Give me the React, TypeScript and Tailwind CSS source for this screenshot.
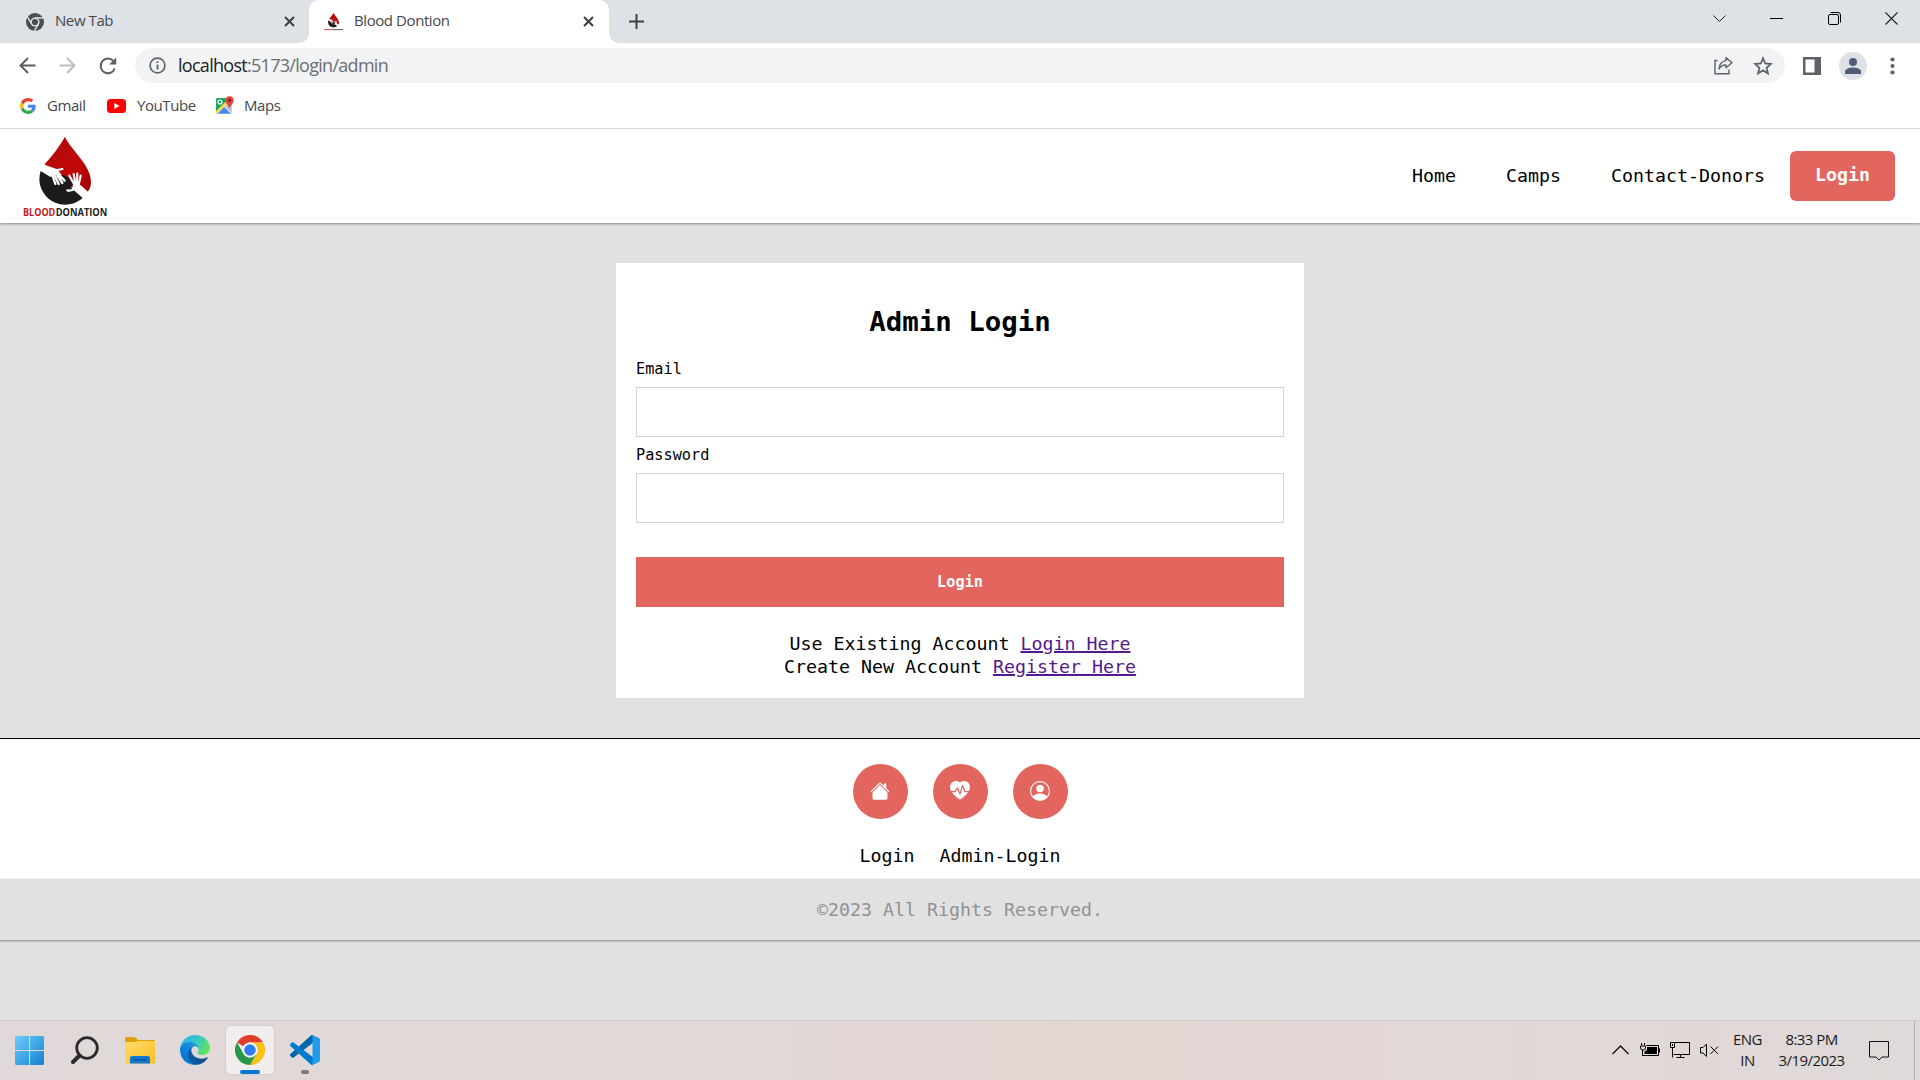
import React from "react";
import { BsHouseFill, BsHeartPulseFill, BsPersonCircle } from "react-icons/bs";

const ui = "font-['Open_Sans','Noto_Sans',sans-serif]";

function Drop() {
  return (
    <g>
      <path fill="url(#blood)" d="M195 48C214 90 273 132 273 184C273 196 269 206 263 214L240 206L216 198L204 176L150 162L134 130Q170 92 195 48Z" />
      <path fill="#1b1b1b" d="M122 151L150 168L190 163Q208 168 218 190L214 202L248 232A78 78 0 0 1 118 178Q118 163 122 151Z" />
      <g fill="none" stroke="#fff" strokeLinecap="round">
        <path strokeWidth="17" d="M128 141L160 160" />
        <path strokeWidth="12" d="M136 139L168 151L178 164" />
        <path strokeWidth="7" d="M158 147Q170 150 187 145M158 166L166 190M166 168L176 190M172 164L187 187M176 162L194 180" />
        <path strokeWidth="19" d="M228 195L244 209" />
        <path strokeWidth="20" d="M240 205L264 227" />
        <path strokeWidth="6.5" d="M222 190L208 165M226 188L221 160M231 188L232 159M236 192L242 165M226 203Q214 212 202 209" />
      </g>
    </g>
  );
}

function BloodDefs() {
  return (
    <defs>
      <linearGradient id="blood" x1="0" x2="1" y1="0" y2="1">
        <stop offset="0" stopColor="#a80c0c" />
        <stop offset="0.6" stopColor="#c40606" />
        <stop offset="1" stopColor="#a00000" />
      </linearGradient>
    </defs>
  );
}

function Logo() {
  return (
    <svg className="h-[85px] w-[90px]" viewBox="60 40 270 255">
      <BloodDefs />
      <Drop />
      <text x="69" y="287" fontSize="29" fontWeight="700" fontFamily="Open Sans" textLength="97" lengthAdjust="spacingAndGlyphs" fill="#c41a1a">BLOOD</text>
      <text x="167" y="287" fontSize="29" fontWeight="700" fontFamily="Open Sans" textLength="155" lengthAdjust="spacingAndGlyphs" fill="#1d1d1d">DONATION</text>
    </svg>
  );
}

function CloseX() {
  return (
    <svg className="size-[11px]" viewBox="0 0 11 11" stroke="#3c4043" strokeWidth="2" fill="none">
      <path d="M1 1L10 10M10 1L1 10" />
    </svg>
  );
}

function TabStrip() {
  const title = `whitespace-nowrap pb-[3px] text-[15px] leading-[20px] tracking-[-0.42px] text-[#45484c] ${ui}`;
  return (
    <div className="flex h-[43px] bg-[#dee1e6]">
      <div className="flex w-[309px] items-center overflow-hidden bg-white">
        <div className="flex h-[43px] w-[309px] items-center rounded-br-[10px] bg-[#dee1e6] pl-[26px]">
          <svg className="size-[18px]" viewBox="0 0 18 18">
            <circle cx="9" cy="9" r="9" fill="#4a4d51" />
            <circle cx="9" cy="9" r="4.6" fill="#dee1e6" />
            <circle cx="9" cy="9" r="3.1" fill="#4a4d51" />
            <path d="M9 5H17M5.6 11L1.6 4.2M12.4 11L8.4 17.9" stroke="#dee1e6" strokeWidth="1.4" />
          </svg>
          <span className={`ml-[11px] w-[229px] ${title}`}>New Tab</span>
          <CloseX />
        </div>
      </div>
      <div className="flex bg-white">
        <div className="flex bg-[#dee1e6]">
          <div className="flex h-[43px] w-[300px] items-center rounded-t-[10px] bg-white pl-[15px]">
            <svg className="size-[19px]" viewBox="60 40 270 255">
              <Drop />
              <path d="M60 283H166" stroke="#c44" strokeWidth="14" />
              <path d="M166 283H330" stroke="#555" strokeWidth="14" />
            </svg>
            <span className={`ml-[11px] w-[229px] ${title}`}>Blood Dontion</span>
            <CloseX />
          </div>
        </div>
      </div>
      <div className="flex-1 bg-white">
        <div className="flex h-[43px] items-center justify-between rounded-bl-[10px] bg-[#dee1e6] pl-[20px] pr-[22px]">
          <svg className="size-[15px]" viewBox="0 0 15 15" stroke="#3c4043" strokeWidth="2">
            <path d="M7.5 0V15M0 7.5H15" />
          </svg>
          <div className="flex items-center gap-[44.3px] pb-[6px]">
            <svg className="size-[13px]" viewBox="0 0 13 13" fill="none" stroke="#222"><path d="M0.5 3.5L6.5 9.5L12.5 3.5" /></svg>
            <svg className="size-[13px]" viewBox="0 0 13 13" stroke="#000"><path d="M0 6.5H13" /></svg>
            <svg className="size-[13px]" viewBox="0 0 13 13" fill="none" stroke="#000">
              <rect x="0.5" y="2.5" width="10" height="10" rx="1.5" />
              <path d="M2.5 0.5H10Q12.5 0.5 12.5 3V10.5" />
            </svg>
            <svg className="size-[13px]" viewBox="0 0 13 13" stroke="#222" strokeWidth="1.1"><path d="M0.5 0.5L12.5 12.5M12.5 0.5L0.5 12.5" /></svg>
          </div>
        </div>
      </div>
    </div>
  );
}

function Toolbar() {
  return (
    <div className="flex h-[45px] items-center bg-white pl-[19px]">
      <svg className="size-[17px]" viewBox="0 0 17 17" fill="none" stroke="#5a5d61" strokeWidth="1.9"><path d="M16.5 8.5H1.5M9 1L1.5 8.5L9 16" /></svg>
      <svg className="ml-[23px] size-[17px]" viewBox="0 0 17 17" fill="none" stroke="#bcbdbf" strokeWidth="1.9"><path d="M0.5 8.5H15.5M8 1L15.5 8.5L8 16" /></svg>
      <svg className="ml-[23px] size-[18px]" viewBox="0 0 18 18" fill="none" stroke="#5a5d61" strokeWidth="2">
        <path d="M15.8 11.5A7.3 7.3 0 1 1 14.2 3.8" />
        <path d="M17.2 0.5V7.5H10.2Z" fill="#5a5d61" stroke="none" />
      </svg>
      <div className="ml-[18px] flex h-[35px] w-[1650px] items-center rounded-full bg-[#f1f3f4] pl-[14px] pr-[12px]">
        <svg className="size-[17px]" viewBox="0 0 17 17" fill="none" stroke="#5f6368">
          <circle cx="8.5" cy="8.500" r="7.400" strokeWidth="1.700" />
          <path d="M8.500 7.500V12.600M8.500 4.200V6" strokeWidth="1.800" />
        </svg>
        <span className={`ml-[12px] flex-1 whitespace-nowrap pb-px text-[18px] leading-[24px] tracking-[-0.71px] text-[#6b6f74] ${ui}`}>
          <span className="text-[#202124]">localhost</span>:5173/login/admin
        </span>
        <svg className="h-[19px] w-[19px]" viewBox="0 0 19 19" fill="none" stroke="#5f6368" strokeWidth="1.400">
          <path d="M3.500 4.500H1V17.700H15V13.500" />
          <path d="M12 1.600L18 6.700L12 11.800V9Q7.500 8.600 5 12.800Q5.600 5.400 12 4.600Z" strokeLinejoin="round" />
        </svg>
        <svg className="ml-[20px] size-[20px]" viewBox="0 0 20 20" fill="none" stroke="#5f6368" strokeWidth="1.800">
          <path d="M10 2.200L12.200 7.500L17.900 8L13.600 11.800L14.900 17.400L10 14.400L5.100 17.400L6.400 11.800L2.100 8L7.800 7.500Z" />
        </svg>
      </div>
      <svg className="ml-[18px] size-[18px]" viewBox="0 0 18 18">
        <path fill="#5f6368" d="M0 0H18V18H0Z" />
        <path fill="#fff" d="M2.500 2.500H11.500V15.500H2.500Z" />
      </svg>
      <div className="ml-[18px] flex size-[28px] items-center justify-center rounded-full bg-[#dee1e6]">
        <svg className="size-[16px]" viewBox="0 0 16 16" fill="#4f5d75">
          <circle cx="8" cy="4" r="4" />
          <path d="M0 16V13.500C0 10.800 5 9.600 8 9.600S16 10.800 16 13.500V16Z" />
        </svg>
      </div>
      <svg className="ml-[23px] h-[18px] w-[5px]" viewBox="0 0 5 18" fill="#5f6368">
        <circle cx="2.500" cy="2.500" r="2.100" /><circle cx="2.500" cy="9" r="2.100" /><circle cx="2.500" cy="15.500" r="2.100" />
      </svg>
    </div>
  );
}

function Bookmarks() {
  const label = `whitespace-nowrap pb-[2px] text-[15px] leading-[20px] tracking-[-0.42px] text-[#45484c] ${ui}`;
  return (
    <div className="flex h-[41px] items-center border-b border-[#dadce0] bg-white pb-[5px] pl-[20px]">
      <svg className="size-[16px]" viewBox="0 0 48 48">
        <path fill="#EA4335" d="M24 9.5c3.54 0 6.71 1.22 9.21 3.6l6.85-6.85C35.9 2.38 30.47 0 24 0 14.62 0 6.51 5.38 2.56 13.22l7.98 6.19C12.43 13.72 17.74 9.5 24 9.5z" />
        <path fill="#4285F4" d="M46.98 24.55c0-1.57-.15-3.09-.38-4.55H24v9.02h12.94c-.58 2.96-2.26 5.48-4.78 7.18l7.73 6c4.51-4.18 7.09-10.36 7.09-17.65z" />
        <path fill="#FBBC05" d="M10.53 28.59c-.48-1.45-.76-2.99-.76-4.59s.27-3.14.76-4.59l-7.98-6.19C.92 16.46 0 20.12 0 24c0 3.88.92 7.54 2.56 10.78l7.97-6.19z" />
        <path fill="#34A853" d="M24 48c6.48 0 11.93-2.13 15.89-5.81l-7.73-6c-2.15 1.45-4.92 2.3-8.16 2.3-6.26 0-11.57-4.22-13.47-9.91l-7.98 6.19C6.51 42.62 14.62 48 24 48z" />
      </svg>
      <span className={`ml-[11px] w-[60px] ${label}`}>Gmail</span>
      <svg className="h-[14px] w-[19px]" viewBox="0 0 19 14">
        <rect width="19" height="14" rx="3.5" fill="#f00" />
        <path d="M7.3 4V10L12.6 7Z" fill="#fff" />
      </svg>
      <span className={`ml-[11px] w-[78px] ${label}`}>YouTube</span>
      <svg className="h-[19px] w-[20px]" viewBox="0 0 20 19">
        <rect x="1" y="2" width="16" height="16" rx="1.5" fill="#e8eaed" />
        <path d="M1 3.5Q1 2 2.500 2H16L1 17Z" fill="#1fa463" />
        <path d="M2.500 17.800L9 11L16 17.800Z" fill="#4a89f3" />
        <path d="M9.500 10.500L16.800 17.500V8L13.500 7Z" fill="#c6cad0" />
        <path d="M1 15L12.500 4L13.500 6L1.500 18Z" fill="#ffd83b" />
        <circle cx="4.900" cy="6" r="2" fill="none" stroke="#fff" strokeWidth="1.100" />
        <path d="M14.500 13C13.800 9 10.600 8 10.600 4.200A4 4 0 0 1 18.600 4.200C18.600 8 15.200 9 14.500 13Z" fill="#e0443e" />
        <circle cx="14.600" cy="4.300" r="1.500" fill="#7c1f1c" />
      </svg>
      <span className={`ml-[9px] ${label}`}>Maps</span>
    </div>
  );
}

function SiteHeader() {
  return (
    <header className="relative flex h-[94px] items-center justify-between bg-white pl-[20px] pr-[25px] shadow-[0_1px_2px_rgba(0,0,0,0.4)]">
      <Logo />
      <nav className="flex items-center text-[18.27px]">
        <a>Home</a>
        <a className="ml-[50px]">Camps</a>
        <a className="ml-[50px]">Contact-Donors</a>
        <a className="ml-[25px] flex h-[50px] w-[105px] items-center justify-center rounded-[6px] bg-[#e2665e] pb-[2px] font-bold text-white">Login</a>
      </nav>
    </header>
  );
}

function LoginCard() {
  return (
    <form className="mx-auto mt-[40px] flex h-[435px] w-[688px] flex-col bg-white px-[20px] pt-[39px]">
      <h1 className="mb-[18px] text-center text-[27.4px] font-bold leading-[39px]">Admin Login</h1>
      <label className="mb-[8px] text-[15.23px] leading-[20px]">Email</label>
      <input className="mb-[8px] h-[50px] border border-[#d3d3d3] outline-none" />
      <label className="mb-[8px] text-[15.23px] leading-[20px]">Password</label>
      <input type="password" className="h-[50px] border border-[#d3d3d3] outline-none" />
      <button type="button" className="mt-[34px] h-[50px] bg-[#e2665e] text-[15.23px] font-bold text-white">Login</button>
      <div className="mt-[25px] text-center text-[18.27px] leading-[23px]">
        <p>Use Existing Account <a className="text-[#551a8b] underline decoration-2 underline-offset-[1px]">Login Here</a></p>
        <p>Create New Account <a className="text-[#551a8b] underline decoration-2 underline-offset-[1px]">Register Here</a></p>
      </div>
    </form>
  );
}

function SiteFooter() {
  const round = "flex size-[55px] items-center justify-center rounded-full bg-[#e2665e] pb-[2px] text-[20px] text-white";
  return (
    <footer className="text-[18.27px]">
      <div className="mt-[40px] h-[141px] border-t border-black bg-white pt-[25px]">
        <div className="flex justify-center gap-[25px]">
          <span className={round}><BsHouseFill /></span>
          <span className={round}><BsHeartPulseFill /></span>
          <span className={round}><BsPersonCircle /></span>
        </div>
        <div className="mt-[25px] flex justify-center gap-[25px] leading-[24px]">
          <a>Login</a>
          <a>Admin-Login</a>
        </div>
      </div>
      <div className="h-[61px] text-center leading-[61px] text-[#929292] shadow-[0_1px_2px_rgba(0,0,0,0.4)]">©2023 All Rights Reserved.</div>
    </footer>
  );
}

function Taskbar() {
  const slot = "flex h-[48px] w-[48px] items-center justify-center";
  return (
    <div className={`flex h-[60px] items-center justify-between border-t border-[#d0c8ca] bg-[linear-gradient(90deg,#e1d9d9_0%,#e1d8d7_40%,#e5d5d2_55%,#e2d8d6_75%,#dfd9d9_100%)] pl-[6px] text-[#1b1b1b] ${ui}`}>
      <div className="flex gap-[7px] pb-px">
        <div className={slot}>
          <svg className="mr-px size-[29px]" viewBox="0 0 29 29">
            <defs>
              <linearGradient id="win" gradientUnits="userSpaceOnUse" x1="0" y1="0" x2="29" y2="29"><stop offset="0" stopColor="#6bcdf8" /><stop offset="1" stopColor="#1580d4" /></linearGradient>
            </defs>
            <path fill="url(#win)" d="M1.5 0H14V14H0V1.5Q0 0 1.5 0ZM15 0H27.500Q29 0 29 1.500V14H15ZM0 15H14V29H1.500Q0 29 0 27.500ZM15 15H29V27.500Q29 29 27.500 29H15Z" />
          </svg>
        </div>
        <div className={slot}>
          <svg className="size-[28px]" viewBox="0 0 28 28" fill="none" stroke="#2b2b2b">
            <circle cx="16" cy="12" r="10.300" strokeWidth="2.800" />
            <path d="M8.500 19.500L2 26" strokeWidth="4" strokeLinecap="round" />
          </svg>
        </div>
        <div className={slot}>
          <svg className="h-[27px] w-[30px]" viewBox="0 0 30 27">
            <defs><linearGradient id="fold" x1="0" y1="0" x2="1" y2="1"><stop offset="0" stopColor="#ffdc6b" /><stop offset="1" stopColor="#fcbd24" /></linearGradient></defs>
            <path d="M0 1Q0 0 1.500 0H9Q10.500 0 11.500 1.500L13 3H29Q30 3 30 4V12H0Z" fill="#dfa00c" />
            <path d="M0 5H10.500Q12 5 13 4H30V26.500H0Z" fill="url(#fold)" />
            <path d="M5 26.500V21Q5 19 7 19H23Q25 19 25 21V26.500Z" fill="#1177cf" />
            <path d="M8.500 22.800H21.500" stroke="#0a4a8c" strokeWidth="1.300" />
          </svg>
        </div>
        <div className={slot}>
          <svg className="size-[30px]" viewBox="0 0 256 256">
            <defs>
              <linearGradient id="eA" x1="0.200" y1="0.700" x2="0.950" y2="0.700"><stop offset="0" stopColor="#0c59a4" /><stop offset="1" stopColor="#114a8b" /></linearGradient>
              <linearGradient id="eB" x1="0.800" y1="0.100" x2="0.300" y2="0.950"><stop offset="0" stopColor="#1b9de2" /><stop offset="0.500" stopColor="#0f80d6" /><stop offset="1" stopColor="#0078d4" /></linearGradient>
              <linearGradient id="eC" x1="0" y1="0.300" x2="1" y2="0.700"><stop offset="0" stopColor="#2fb4e8" /><stop offset="0.450" stopColor="#32c4cc" /><stop offset="1" stopColor="#66eb4e" /></linearGradient>
            </defs>
            <path fill="url(#eA)" d="M231 190.500c-3.400 1.800-6.900 3.400-10.500 4.700a101.900 101.900 0 0 1-35.900 6.500c-47.300 0-88.500-32.500-88.500-74.300a31.500 31.500 0 0 1 16.400-27.300c-42.800 1.800-53.800 46.400-53.800 72.500 0 73.900 68.100 81.400 82.800 81.400 7.900 0 19.800-2.300 27-4.600l1.300-.4a128.300 128.300 0 0 0 66.600-52.800 4 4 0 0 0-5.400-5.700Z" />
            <path fill="url(#eB)" d="M105.700 241.400a79.200 79.200 0 0 1-22.700-21.300 80.700 80.700 0 0 1 29.500-120c3.200-1.500 8.500-4.100 15.600-4a32.400 32.400 0 0 1 25.700 13 31.900 31.900 0 0 1 6.300 18.700c0-.2 24.500-79.600-80-79.600-43.900 0-80 41.700-80 78.200a130.200 130.200 0 0 0 12.100 56 128 128 0 0 0 156.400 67 75.500 75.500 0 0 1-62.800-8Z" />
            <path fill="url(#eC)" d="M152.300 148.900c-.9 1-3.400 2.500-3.400 5.600 0 2.600 1.700 5.200 4.800 7.300 14.300 10 41.400 8.600 41.500 8.600 10.700 0 21.100-2.900 30.300-8.300A61.400 61.400 0 0 0 256 109.200c.3-22.400-8-37.300-11.300-43.900C223.500 23.900 177.700 0 128 0A128 128 0 0 0 0 126.200c.5-36.500 36.800-66 80-66 3.500 0 23.500.3 42 10.100a72.600 72.600 0 0 1 30.900 29.300c6.100 10.600 7.200 24.100 7.200 29.500s-2.700 13.300-7.800 19.800Z" />
          </svg>
        </div>
        <div className={`${slot} relative rounded-[5px] bg-[#f2eeee] shadow-[0_0_1px_1px_rgba(0,0,0,0.06)]`}>
          <svg className="size-[30px]" viewBox="0 0 48 48">
            <path fill="#e33b2e" d="M24 0A24 24 0 0 1 44.800 12H24A12 12 0 0 0 13.600 18L3.200 12A24 24 0 0 1 24 0Z" />
            <path fill="#fbc116" d="M44.800 12A24 24 0 0 1 24 48L34.400 30A12 12 0 0 0 34.400 18L24 12Z" />
            <path fill="#279847" d="M24 48A24 24 0 0 1 3.200 12L13.600 30A12 12 0 0 0 24 36L34.400 30Z" />
            <circle cx="24" cy="24" r="12" fill="#fff" />
            <circle cx="24" cy="24" r="9.300" fill="#2f7cf0" />
          </svg>
          <span className="absolute bottom-0 left-[14px] h-[4px] w-[20px] rounded-full bg-[#0078d4]" />
        </div>
        <div className={`${slot} relative`}>
          <svg className="size-[30px]" viewBox="0 0 100 100">
            <path fill="#0065a9" d="M96.500 10.800L75.900 0.900A6.200 6.200 0 0 0 68.800 2.100L1.300 63.600A4.200 4.200 0 0 0 1.300 69.800L6.800 74.800A4.200 4.200 0 0 0 12.100 75L93.400 13.400C96.100 11.300 100 13.300 100 16.700V16.400A6.300 6.300 0 0 0 96.500 10.800Z" />
            <path fill="#007acc" d="M96.500 89.200L75.900 99.100A6.200 6.200 0 0 1 68.800 97.900L1.300 36.400A4.200 4.200 0 0 1 1.300 30.200L6.800 25.200A4.200 4.200 0 0 1 12.100 25L93.400 86.600C96.100 88.700 100 86.700 100 83.300V83.600A6.300 6.300 0 0 1 96.500 89.200Z" />
            <path fill="#1f9cf0" d="M75.900 99.100A6.200 6.200 0 0 1 68.800 97.900C71.100 100.200 75 98.600 75 95.300V4.700C75 1.400 71.100-0.200 68.800 2.100A6.200 6.200 0 0 1 75.900 0.900L96.500 10.800A6.300 6.300 0 0 1 100 16.400V83.600A6.300 6.300 0 0 1 96.500 89.200Z" />
          </svg>
          <span className="absolute bottom-0 left-[20px] h-[4px] w-[8px] rounded-full bg-[#7d7878]" />
        </div>
      </div>
      <div className="flex items-center">
        <svg className="mb-px h-[10px] w-[17px]" viewBox="0 0 17 10" fill="none" stroke="#111" strokeWidth="1.300"><path d="M0.500 9L8.500 1L16.500 9" /></svg>
        <svg className="mb-[2px] ml-[11px] h-[14px] w-[20px]" viewBox="0 0 20 14" fill="none" stroke="#000">
          <path d="M1.500 0V2.500M4.500 0V2.500M0.500 3H5.500V5Q5.500 7 3 7Q0.500 7 0.500 5ZM2.500 7V13" />
          <path d="M6.500 2.500H18.500V12.500H2.500" />
          <path d="M7 4H17V11H4.500V8.500L7 7Z" fill="#000" stroke="none" />
          <path d="M19.500 5.500V9.500" />
        </svg>
        <svg className="mb-px ml-[10px] h-[16px] w-[20px]" viewBox="0 0 20 16" fill="none" stroke="#000">
          <path d="M5 0.500H19.500V12.500H3.500M10.500 12.500V15.500M6.500 15.500H14.500M0.500 0.500H4.500V5.500H0.500ZM2.500 2V4M2.500 5.500V15.500" />
        </svg>
        <svg className="mb-px ml-[10px] h-[16px] w-[19px]" viewBox="0 0 19 16" fill="none" stroke="#000">
          <path d="M0.500 5.500H3L6.500 2V14.500L3 11H0.500ZM10.500 4.500L18 12M18 4.500L10.500 12" />
        </svg>
        <div className="ml-[8px] w-[41px] pb-px text-center text-[15px] leading-[21.500px] tracking-[-0.500px]">ENG<br />IN</div>
        <div className="ml-px w-[85px] pb-[2px] text-center text-[15px] leading-[21px] tracking-[-0.550px]">8:33 PM<br />3/19/2023</div>
        <svg className="ml-[15px] h-[20px] w-[20px]" viewBox="0 0 20 20" fill="none" stroke="#111"><path d="M0.500 0.500H19.500V16H13L10 19L7 16H0.500Z" /></svg>
        <div className="ml-[25px] h-[59px] w-[6px] border-l border-[#b5b0b0]" />
      </div>
    </div>
  );
}

export default function App() {
  return (
    <div className="flex h-[1080px] w-[1920px] flex-col overflow-hidden bg-[#e1e1e1] font-['DejaVu_Sans_Mono',monospace] text-black">
      <TabStrip />
      <Toolbar />
      <Bookmarks />
      <SiteHeader />
      <main><LoginCard /></main>
      <SiteFooter />
      <div className="flex-1" />
      <Taskbar />
    </div>
  );
}
